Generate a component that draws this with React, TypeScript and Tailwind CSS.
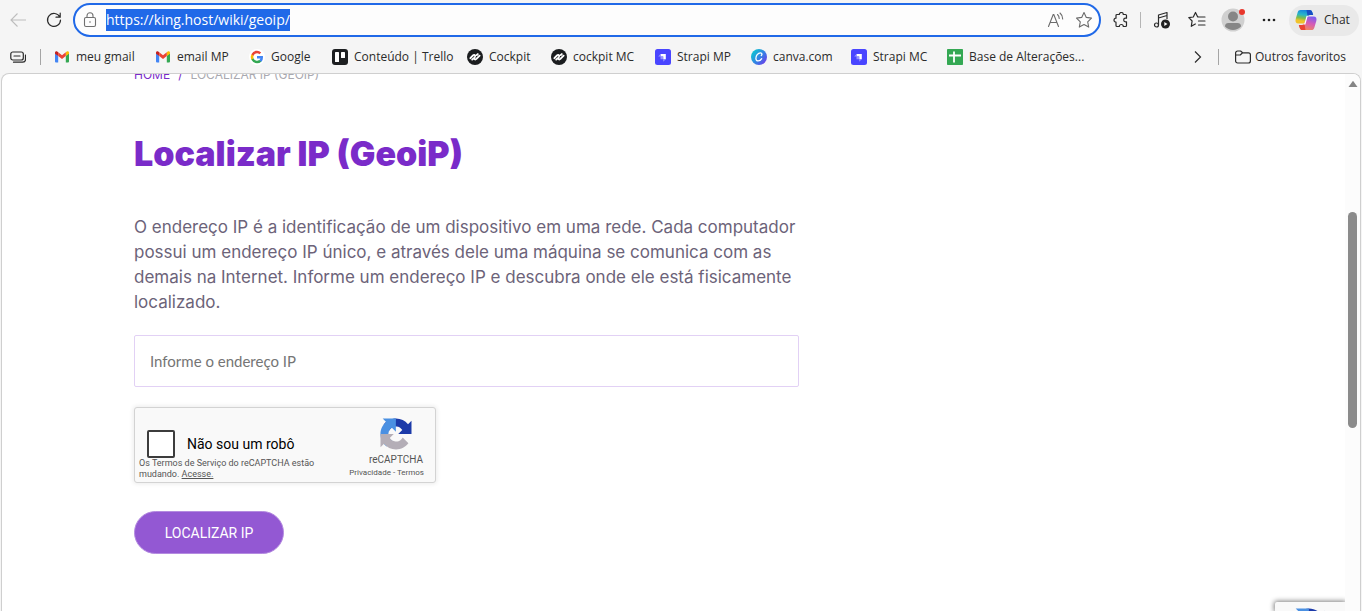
import { useState } from "react";
import type { ReactNode } from "react";

const GmailIcon = () => (
  <svg className="h-4 w-4" viewBox="0 0 16 16">
    <path d="M1 4v8.500a1 1 0 0 0 1 1h2.200V6.800z" fill="#4285f4" />
    <path d="M15 4v8.500a1 1 0 0 1-1 1h-2.200V6.800z" fill="#34a853" />
    <path d="M11.800 7V3.200l1-.7c1-.6 2.200 0 2.200 1.200v1z" fill="#fbbc04" />
    <path d="M4.200 7V3.200l-1-.7C2.200 1.900 1 2.500 1 3.700v1z" fill="#c5221f" />
    <path d="M4.200 3.200 8 6.200l3.800-3V7L8 10 4.200 7z" fill="#ea4335" />
  </svg>
);

const GoogleIcon = () => (
  <svg className="h-4 w-4" viewBox="0 0 16 16">
    <circle cx="8" cy="8" r="8" fill="#fff" />
    <path d="M14 8.200c0-.5 0-.9-.1-1.200H8v2.400h3.400a3 3 0 0 1-1.300 1.900v1.700h2.100A6.300 6.300 0 0 0 14 8.200z" fill="#4285f4" />
    <path d="M8 14.200a6 6 0 0 0 4.200-1.500l-2.100-1.600A3.800 3.800 0 0 1 4.500 9.200H2.400v1.600A6.200 6.200 0 0 0 8 14.200z" fill="#34a853" />
    <path d="M4.500 9.200a3.700 3.700 0 0 1 0-2.400V5.200H2.400a6.200 6.200 0 0 0 0 5.600z" fill="#fbbc05" />
    <path d="M8 4.300c1 0 1.800.3 2.400.9l1.800-1.800A6.200 6.200 0 0 0 2.400 5.200l2.100 1.600A3.800 3.800 0 0 1 8 4.300z" fill="#ea4335" />
  </svg>
);

const TrelloIcon = () => (
  <svg className="h-4 w-4" viewBox="0 0 16 16">
    <rect width="16" height="16" rx="3" fill="#1d1f21" />
    <rect x="3" y="3" width="4" height="10" rx="0.6" fill="#fff" />
    <rect x="9" y="3" width="4" height="6" rx="0.6" fill="#fff" />
  </svg>
);

const CockpitIcon = () => (
  <svg className="h-4 w-4" viewBox="0 0 16 16">
    <circle cx="8" cy="8" r="8" fill="#1b1d1f" />
    <path
      d="M3.400 9.200 6 6.400C7.200 5.300 8.700 6.200 8 7.600L7.400 8.700C6.800 10.100 8.200 11 9.400 9.900L12.600 6.700M5.200 10.600l1-.9M9.800 6l1-.9"
      fill="none"
      stroke="#fff"
      strokeWidth="1.900"
      strokeLinecap="round"
    />
  </svg>
);

const StrapiIcon = () => (
  <svg className="h-4 w-4" viewBox="0 0 16 16">
    <rect width="16" height="16" rx="2.500" fill="#4945ff" />
    <path d="M5.500 5h5.300v5.300H8.200V7.600H5.500z" fill="#fff" />
    <path d="M5.500 5v2.600H3.200zM8.200 10.300h2.600l-2.600 2.400zM5.500 7.600h2.700v2.700H5.500z" fill="#9593ff" />
  </svg>
);

const CanvaIcon = () => (
  <svg className="h-4 w-4" viewBox="0 0 16 16">
    <defs>
      <linearGradient id="canva" x1="0" y1="0.200" x2="1" y2="1">
        <stop offset="0.100" stopColor="#12bcd4" />
        <stop offset="0.550" stopColor="#3a78e6" />
        <stop offset="1" stopColor="#7d2ae8" />
      </linearGradient>
    </defs>
    <circle cx="8" cy="8" r="8" fill="url(#canva)" />
    <path
      d="M10.300 6.500c1-.8.900-2.700-.8-2.700-2.500 0-4.800 3-4.600 5.600.1 3.400 4 3.200 5.800.3"
      fill="none"
      stroke="#fff"
      strokeWidth="1.300"
      strokeLinecap="round"
    />
  </svg>
);

const SheetsIcon = () => (
  <svg className="h-4 w-4" viewBox="0 0 16 16">
    <rect width="16" height="16" rx="0.800" fill="#34a853" />
    <path d="M2 6.500h12M7 2.500v11" stroke="#fff" strokeWidth="1.800" />
  </svg>
);

const CopilotIcon = () => (
  <svg className="h-[22px] w-[22px]" viewBox="0 0 22 22">
    <defs>
      <linearGradient id="cpLeft" x1="0.500" y1="0" x2="0.300" y2="1">
        <stop offset="0" stopColor="#1583df" />
        <stop offset="0.350" stopColor="#28b6c8" />
        <stop offset="0.600" stopColor="#7ebd4a" />
        <stop offset="0.800" stopColor="#f0c22b" />
      </linearGradient>
      <linearGradient id="cpRight" x1="0.700" y1="0" x2="0.300" y2="1">
        <stop offset="0" stopColor="#7d5df0" />
        <stop offset="0.450" stopColor="#d45bb8" />
        <stop offset="1" stopColor="#f58a57" />
      </linearGradient>
    </defs>
    <path d="M5.500 1h9c1.500 0 2.300.8 2.800 2.300L18.200 6h-3c-1.500 0-2.300.7-2.800 2.200l-2 6.300H3.500C.8 14.500 0 12.500.7 10l2-6.700C3.200 1.700 4 1 5.500 1z" fill="url(#cpLeft)" />
    <path d="M11.500 1h3c1.500 0 2.300.8 2.800 2.300L18.200 6h-3c-1.300 0-2 .3-2.600 1.500z" fill="#174fc4" />
    <path d="M16.500 21h-9c-1.500 0-2.300-.8-2.800-2.300L3.800 16h3c1.500 0 2.300-.7 2.800-2.200l2-6.300h6.900c2.700 0 3.500 2 2.800 4.500l-2 6.700c-.5 1.600-1.300 2.300-2.800 2.300z" fill="url(#cpRight)" />
    <path d="M10.500 21h-3c-1.500 0-2.300-.8-2.800-2.300L3.800 16h3c1.300 0 2-.3 2.600-1.500z" fill="#ea4335" />
    <path d="M12.400 8.200c.3-.7.700-1.200 1.300-1.500h-2.100l-2 7.100c-.3.800-.7 1.300-1.300 1.700h2.100z" fill="#fff" />
  </svg>
);

const RecaptchaLogo = () => (
  <svg className="h-8 w-8" viewBox="-1 -1 66 66">
    <path
      d="M64 31.955c0-.46-.011-.918-.032-1.373V4.604l-7.182 7.182C50.908 4.591 41.959 0 31.940 0 21.513 0 12.249 4.971 6.408 12.671l11.772 11.897a15.600 15.600 0 0 1 4.768-5.350c2.056-1.605 4.970-2.917 8.990-2.917.486 0 .861.057 1.136.164 4.982.393 9.300 3.142 11.843 7.133l-8.333 8.333c10.555-.041 22.477-.066 27.416.024"
      fill="#1c3aa9"
    />
    <path
      d="M31.862.004c-.46 0-.916.012-1.371.033H4.513l7.182 7.182C4.500 13.097-.091 22.046-.091 32.065c0 10.427 4.971 19.691 12.671 25.532l11.897-11.772a15.600 15.600 0 0 1-5.350-4.768c-1.605-2.056-2.917-4.970-2.917-8.990 0-.486.057-.861.164-1.136.393-4.982 3.142-9.300 7.133-11.843l8.333 8.333C31.799 16.866 31.774 4.944 31.862.004"
      fill="#4a90e2"
    />
    <path
      d="M0 32.050c0 .46.011.918.032 1.373v25.978l7.182-7.182c5.878 7.195 14.827 11.786 24.846 11.786 10.427 0 19.691-4.971 25.532-12.671L45.820 39.437a15.600 15.600 0 0 1-4.768 5.350c-2.056 1.605-4.970 2.917-8.990 2.917-.486 0-.861-.057-1.136-.164-4.982-.393-9.300-3.142-11.843-7.133l8.333-8.333C16.861 32.115 4.939 32.140 0 32.050"
      fill="#b4aeb7"
    />
  </svg>
);

const bookmarks: { label: string; width: string; icon: ReactNode }[] = [
  { label: "meu gmail", width: "w-[101px]", icon: <GmailIcon /> },
  { label: "email MP", width: "w-[94px]", icon: <GmailIcon /> },
  { label: "Google", width: "w-[83px]", icon: <GoogleIcon /> },
  { label: "Conteúdo | Trello", width: "w-[135px]", icon: <TrelloIcon /> },
  { label: "Cockpit", width: "w-[84px]", icon: <CockpitIcon /> },
  { label: "cockpit MC", width: "w-[104px]", icon: <CockpitIcon /> },
  { label: "Strapi MP", width: "w-24", icon: <StrapiIcon /> },
  { label: "canva.com", width: "w-[100px]", icon: <CanvaIcon /> },
  { label: "Strapi MC", width: "w-24", icon: <StrapiIcon /> },
  { label: "Base de Alterações...", width: "w-36", icon: <SheetsIcon /> },
];

function ToolbarButton({ label, className, children }: { label: string; className?: string; children: ReactNode }) {
  return (
    <button type="button" aria-label={label} className={`flex h-8 shrink-0 items-center justify-center ${className ?? "w-9"}`}>
      {children}
    </button>
  );
}

function Toolbar() {
  const [url, setUrl] = useState("https://king.host/wiki/geoip/");

  return (
    <div className="flex h-10 items-center">
      <ToolbarButton label="Voltar">
        <svg className="h-4 w-4" viewBox="0 0 16 16" fill="none" stroke="#bdbdbd" strokeWidth="1.100">
          <path d="M16 8H1M7.500 1.500 1 8l6.500 6.500" />
        </svg>
      </ToolbarButton>
      <ToolbarButton label="Atualizar">
        <svg className="h-4 w-4" viewBox="0 0 16 16" fill="none" stroke="#2b2b2b" strokeWidth="1.200" strokeLinecap="round">
          <path d="M13.800 5A6.500 6.500 0 1 0 14.500 8M14.200 1v4.200H10" />
        </svg>
      </ToolbarButton>

      <div className="ml-px flex h-[34px] min-w-0 flex-1 items-center rounded-full border-2 border-[#2069e8] bg-[#fdfdfd] pl-[7px] pr-px">
        <svg className="mr-2 h-4 w-4 shrink-0" viewBox="0 0 16 16" fill="none" stroke="#707070" strokeWidth="1.100">
          <rect x="2.500" y="5.500" width="11" height="9" rx="1.500" />
          <path d="M5 5.500V3.800a3 3 0 0 1 6 0v1.700" />
          <circle cx="8" cy="10" r="0.800" fill="#707070" stroke="none" />
        </svg>
        <div className="min-w-0 flex-1">
          <input
            aria-label="Barra de endereços"
            value={url}
            onChange={(e) => setUrl(e.target.value)}
            className="block h-[22px] max-w-full bg-[#2069e8] text-sm leading-[22px] text-white outline-none field-sizing-content"
          />
        </div>
        <ToolbarButton label="Ler em voz alta" className="w-7">
          <svg className="h-[18px] w-[18px]" viewBox="0 0 18 18" fill="none" stroke="#6b6b6b" strokeWidth="1.100" strokeLinecap="round">
            <path d="M1.500 15.500 6.200 3.500h.6l4.700 12M3 11.500h7" />
            <path d="M10.500 3.500c1.200 1 1.700 2.300 1.700 4M13 2c1.800 1.500 2.700 3.500 2.700 6" />
          </svg>
        </ToolbarButton>
        <ToolbarButton label="Favoritar" className="w-7">
          <svg className="h-[18px] w-[18px]" viewBox="0 0 18 18" fill="none" stroke="#6b6b6b" strokeWidth="1.100" strokeLinejoin="round">
            <path d="m9 1.500 2.300 4.900 5.200.7-3.800 3.700 1 5.300L9 13.500l-4.700 2.600 1-5.300L1.500 7.100l5.200-.7z" />
          </svg>
        </ToolbarButton>
      </div>

      <div className="flex shrink-0 items-center pl-1 pr-[3px]">
        <ToolbarButton label="Extensões" className="w-8">
          <svg className="h-4 w-4" viewBox="0 0 16 16" fill="none" stroke="#2b2b2b" strokeWidth="1.200" strokeLinejoin="round">
            <path d="M4 2.500h2.300a2 2 0 0 1 4 0h2.200a1 1 0 0 1 1 1v2.700h-1a1.800 1.800 0 0 0 0 3.600h1v3.700a1 1 0 0 1-1 1h-2.200a2 2 0 0 0-4 0H4a1 1 0 0 1-1-1v-3.300a2 2 0 0 1 0-4V3.500a1 1 0 0 1 1-1z" />
          </svg>
        </ToolbarButton>
        <span className="mx-[3px] h-4 w-px bg-[#b5b5b5]" />
        <ToolbarButton label="Mídia">
          <svg className="h-[18px] w-[18px]" viewBox="0 0 18 18" fill="none" stroke="#2b2b2b" strokeWidth="1.200" strokeLinejoin="round">
            <path d="M5.500 14V4l8.500-2.500V8M5.500 7 14 4.500" />
            <circle cx="3.500" cy="14" r="2" />
            <circle cx="12.500" cy="13" r="4.500" fill="#222" stroke="none" />
            <path d="m11.300 11 3.200 2-3.200 2z" fill="#fff" stroke="none" />
          </svg>
        </ToolbarButton>
        <ToolbarButton label="Favoritos" className="w-[34px]">
          <svg className="h-[18px] w-[18px]" viewBox="0 0 18 18" fill="none" stroke="#2b2b2b" strokeWidth="1.200" strokeLinejoin="round" strokeLinecap="round">
            <path d="M10.300 6 9.600 5.800 7.500 1.500 5.300 6l-4.500.7 3.300 3.300-.8 5.300 4-2.300M10.500 6h6.500M10.500 10H17M10.500 14H17" />
          </svg>
        </ToolbarButton>
        <ToolbarButton label="Perfil" className="relative w-[38px]">
          <svg className="h-6 w-6" viewBox="0 0 24 24">
            <circle cx="12" cy="12" r="11.500" fill="#d0d0d0" />
            <circle cx="12" cy="8.500" r="5" fill="#868686" />
            <path d="M4 18.500c0-2 1-3.500 3.500-3.500h9c2.500 0 3.500 1.500 3.500 3.500a11 11 0 0 1-16 0z" fill="#868686" />
          </svg>
          <span className="absolute right-[7px] top-[5px] h-1.5 w-1.5 rounded-full bg-[#e8372c]" />
        </ToolbarButton>
        <ToolbarButton label="Configurações e mais" className="w-[34px]">
          <svg className="h-4 w-4" viewBox="0 0 16 16" fill="#222">
            <circle cx="3" cy="8" r="1.300" />
            <circle cx="8" cy="8" r="1.300" />
            <circle cx="13" cy="8" r="1.300" />
          </svg>
        </ToolbarButton>
        <button type="button" className="ml-[3px] flex h-[31px] w-[70px] items-center gap-[7px] rounded-full bg-[#e9e9e9] pl-1.5 text-xs text-[#2b2b2b]">
          <CopilotIcon />
          Chat
        </button>
      </div>
    </div>
  );
}

function BookmarksBar() {
  return (
    <div className="flex h-[33px] items-center pr-4 text-xs text-[#2b2b2b]">
      <ToolbarButton label="Espaços" className="w-9">
        <svg className="h-4 w-4" viewBox="0 0 16 16" fill="none" stroke="#2b2b2b" strokeWidth="1.200" strokeLinecap="round">
          <rect x="0.800" y="3" width="12.500" height="8" rx="2" />
          <path d="M4 7h6M3.500 13.200h9.300a2.700 2.700 0 0 0 2.700-2.700V6" />
        </svg>
      </ToolbarButton>
      <span className="ml-1 mr-[13px] h-4 w-px shrink-0 bg-[#a5a5a5]" />
      <nav className="flex min-w-0 flex-1 overflow-hidden">
        {bookmarks.map((item, i) => (
          <a key={i} href="#" className={`flex shrink-0 items-center gap-1.5 whitespace-nowrap ${item.width}`}>
            <span className="shrink-0">{item.icon}</span>
            {item.label}
          </a>
        ))}
      </nav>
      <ToolbarButton label="Mais favoritos" className="w-8">
        <svg className="h-4 w-4" viewBox="0 0 16 16" fill="none" stroke="#2b2b2b" strokeWidth="1.200">
          <path d="m5 2.500 5.500 5.500L5 13.500" />
        </svg>
      </ToolbarButton>
      <span className="ml-1 mr-4 h-4 w-px shrink-0 bg-[#a5a5a5]" />
      <a href="#" className="flex items-center gap-1 whitespace-nowrap">
        <svg className="h-4 w-4" viewBox="0 0 16 16" fill="none" stroke="#2b2b2b" strokeWidth="1.200" strokeLinejoin="round">
          <path d="M.6 4a2 2 0 0 1 2-2h3l2 1.800h5.800a2 2 0 0 1 2 2V12a2 2 0 0 1-2 2H2.600a2 2 0 0 1-2-2zM.6 6h4.600l2.400-2.200" />
        </svg>
        Outros favoritos
      </a>
    </div>
  );
}

function Recaptcha() {
  const [checked, setChecked] = useState(false);

  return (
    <div className="flex h-[76px] w-[302px] justify-between rounded-[3px] border border-[#d3d3d3] bg-[#f9f9f9] font-[Roboto,sans-serif] shadow-[0_0_4px_1px_rgba(0,0,0,0.08)]">
      <div className="flex flex-col pl-1 pt-[22px]">
        <label className="flex items-center gap-3 pl-2 text-sm text-black">
          <input
            type="checkbox"
            checked={checked}
            onChange={(e) => setChecked(e.target.checked)}
            className="h-7 w-7 appearance-none rounded-[2px] border-2 border-[#3c3c3c] bg-white checked:bg-[#4a90e2]"
          />
          Não sou um robô
        </label>
        <p className="whitespace-nowrap text-[9px] leading-[11px] text-[#555]">
          Os Termos de Serviço do reCAPTCHA estão
          <br />
          mudando. <a href="#" className="underline">Acesse.</a>
        </p>
      </div>
      <div className="flex flex-col items-end pr-[11px] pt-2.5 text-[#555]">
        <div className="flex flex-col items-center pr-px">
          <RecaptchaLogo />
          <span className="pt-0.5 text-[10px] leading-4">reCAPTCHA</span>
        </div>
        <p className="whitespace-nowrap text-[8px] leading-[10px]">
          <a href="#">Privacidade</a> - <a href="#">Termos</a>
        </p>
      </div>
    </div>
  );
}

function GeoIpPage() {
  const [ip, setIp] = useState("");

  return (
    <main className="min-w-0 flex-1 pl-[132px]">
      <nav className="-mt-[7px] flex gap-2 font-[Inter,sans-serif] text-xs leading-4 text-[#a9a9b0]">
        <a href="#" className="text-[#7a2bc9]">HOME</a>
        <span className="text-[#7a2bc9]">/</span>
        <span>LOCALIZAR IP (GEOIP)</span>
      </nav>
      <h1 className="pt-[51px] font-[Inter,sans-serif] text-[34px] font-black leading-10 text-[#7a2bc9]">Localizar IP (GeoiP)</h1>
      <p className="pt-[41px] font-[Inter,sans-serif] text-[17px] leading-[25px] text-[#6c6379]">
        O endereço IP é a identificação de um dispositivo em uma rede. Cada computador
        <br />
        possui um endereço IP único, e através dele uma máquina se comunica com as
        <br />
        demais na Internet. Informe um endereço IP e descubra onde ele está fisicamente
        <br />
        localizado.
      </p>
      <form className="pt-5" onSubmit={(e) => e.preventDefault()}>
        <input
          type="text"
          aria-label="Informe o endereço IP"
          placeholder="Informe o endereço IP"
          value={ip}
          onChange={(e) => setIp(e.target.value)}
          className="mb-5 block h-[52px] w-full max-w-[665px] rounded-[2px] border border-[#e2d1f5] px-[15px] font-[Lato,sans-serif] text-[15px] text-[#6c6379] outline-none placeholder:text-[#757575]"
        />
        <Recaptcha />
        <button
          type="submit"
          className="mt-7 h-[43px] w-[150px] rounded-full border border-[#b48be0] bg-[#9358d3] font-[Roboto,sans-serif] text-sm text-white"
        >
          LOCALIZAR IP
        </button>
      </form>
    </main>
  );
}

export default function App() {
  return (
    <div className="flex h-screen flex-col overflow-hidden bg-[#f5f5f5] font-['Open_Sans',sans-serif]">
      <header>
        <Toolbar />
        <BookmarksBar />
      </header>
      <div className="mx-px flex min-h-0 flex-1 overflow-hidden rounded-t-lg border border-b-0 border-[#cfcfcf] bg-white">
        <div className="relative flex min-w-0 flex-1 overflow-hidden">
          <GeoIpPage />
          <div className="absolute bottom-0 right-0 h-[9px] w-[70px] overflow-hidden rounded-tl-[2px] bg-[#f9f9f9] pl-[18px] pt-1.5 shadow-[0_0_5px_1px_#808080]">
            <RecaptchaLogo />
          </div>
        </div>
        <div className="flex w-[15px] shrink-0 flex-col items-center bg-[#fcfcfc] pt-1.5">
          <svg className="h-2 w-2.5" viewBox="0 0 10 8">
            <path d="M5 .8 9.500 7H.5z" fill="#858585" />
          </svg>
          <div className="mt-[124px] h-[216px] w-[9px] rounded-full bg-[#8b8b8b]" />
        </div>
      </div>
    </div>
  );
}
